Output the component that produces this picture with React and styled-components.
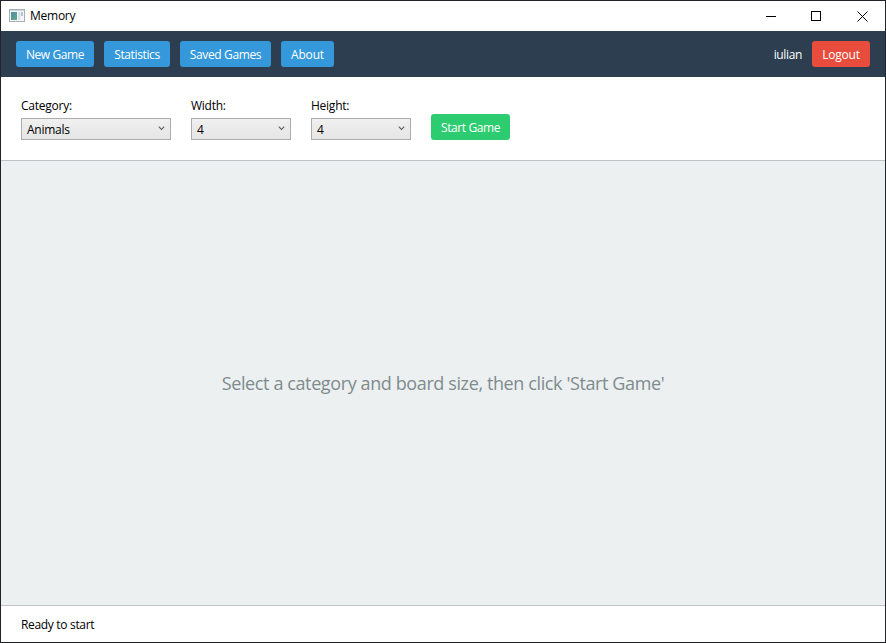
import React from "react";
import styled, { createGlobalStyle } from "styled-components";

const GlobalStyle = createGlobalStyle`
  * { box-sizing: border-box; }
  body { margin: 0; overflow: hidden; }
`;

const Window = styled.div`
  width: 886px;
  height: 643px;
  display: flex;
  flex-direction: column;
  border: 1px solid #22222a;
  background: #fff;
  color: #000;
  font: 12px/16px "Segoe UI", "Open Sans", "Noto Sans", sans-serif;
`;

const TitleBar = styled.header`
  height: 30px;
  flex: none;
  display: flex;
  align-items: center;
  padding-left: 8px;
`;

const Title = styled.span`
  margin-left: 5px;
  flex: 1;
  letter-spacing: -0.25px;
`;

const Caption = styled.button`
  width: ${(p) => p.$width}px;
  height: 30px;
  padding: 0;
  border: 0;
  background: none;
  display: flex;
  align-items: center;
  justify-content: center;
`;

const NavBar = styled.nav`
  height: 46px;
  flex: none;
  display: flex;
  align-items: center;
  gap: 10px;
  padding: 0 15px;
  background: #2c3e50;
`;

const Button = styled.button`
  width: ${(p) => p.$width}px;
  height: 26px;
  flex: none;
  padding: 2px 0 0;
  border: 0;
  border-radius: 3px;
  background: ${(p) => p.$color || "#3498db"};
  color: #fff;
  font: inherit;
  letter-spacing: ${(p) => p.$tracking || 0}px;
  white-space: nowrap;
`;

const User = styled.span`
  margin-left: auto;
  padding-top: 2px;
  color: #fff;
  letter-spacing: -0.35px;
`;

const Options = styled.section`
  height: 84px;
  flex: none;
  display: flex;
  align-items: flex-end;
  gap: 20px;
  padding: 0 20px 20px;
  border-bottom: 1px solid #bdc3c7;
`;

const Field = styled.label`
  width: ${(p) => p.$width}px;
  display: flex;
  flex-direction: column;
  gap: 4px;
  letter-spacing: -0.25px;
`;

const Combo = styled.div`
  height: 22px;
  display: flex;
  align-items: center;
  justify-content: space-between;
  padding: 1px 5px 0;
  border: 1px solid #acacac;
  background: linear-gradient(#f0f0f0, #e5e5e5);
`;

const ChevronIcon = styled.svg`
  margin-bottom: 2px;
`;

const Board = styled.main`
  flex: 1;
  display: flex;
  align-items: center;
  justify-content: center;
  background: #ecf0f1;
  color: #7f8c8d;
  font-size: 18px;
  line-height: 24px;
  letter-spacing: -0.39px;
  white-space: nowrap;
`;

const StatusBar = styled.footer`
  height: 37px;
  flex: none;
  display: flex;
  align-items: center;
  padding: 2px 20px 0;
  border-top: 1px solid #bdc3c7;
  letter-spacing: -0.32px;
`;

const AppIcon = () => (
  <svg width="16" height="14" viewBox="0 0 16 14">
    <defs>
      <linearGradient id="pane" x2="1" y2="1">
        <stop offset="0" stopColor="#4d8fa0" />
        <stop offset="1" stopColor="#69a58c" />
      </linearGradient>
    </defs>
    <rect x=".5" y=".5" width="15" height="12" fill="#f4f6f7" stroke="#a9b0b5" />
    <rect x="1" y="1" width="14" height="1" fill="#cfd6da" />
    <rect x="2" y="3" width="6" height="8" fill="url(#pane)" />
    <rect x="9" y="3" width="2.5" height="8" fill="#d9e2e8" />
    <rect x="12" y="3" width="2" height="4" fill="#b4c4d0" />
  </svg>
);

const Select = ({ label, value, width }) => (
  <Field $width={width}>
    <span>{label}</span>
    <Combo>
      <span>{value}</span>
      <ChevronIcon width="7" height="5" viewBox="0 0 7 5">
        <path d="M.8.7 3.5 3.4 6.2.7" fill="none" stroke="#606060" strokeWidth="1.1" />
      </ChevronIcon>
    </Combo>
  </Field>
);

export default function App() {
  return (
    <>
      <GlobalStyle />
      <Window>
        <TitleBar>
          <AppIcon />
          <Title>Memory</Title>
          <Caption aria-label="Minimize" $width={42}>
            <svg width="10" height="10"><path d="M0 5.5h10" stroke="#000" /></svg>
          </Caption>
          <Caption aria-label="Maximize" $width={48}>
            <svg width="10" height="10"><rect x=".5" y=".5" width="9" height="9" fill="none" stroke="#000" /></svg>
          </Caption>
          <Caption aria-label="Close" $width={45}>
            <svg width="11" height="11"><path d="M.5.5l10 10M10.5.5l-10 10" stroke="#000" /></svg>
          </Caption>
        </TitleBar>
        <NavBar>
          <Button $width={78} $tracking={-0.4}>New Game</Button>
          <Button $width={66} $tracking={-0.38}>Statistics</Button>
          <Button $width={91} $tracking={-0.36}>Saved Games</Button>
          <Button $width={53} $tracking={-0.2}>About</Button>
          <User>iulian</User>
          <Button $width={58} $tracking={-0.2} $color="#e74c3c">Logout</Button>
        </NavBar>
        <Options>
          <Select label="Category:" value="Animals" width={150} />
          <Select label="Width:" value="4" width={100} />
          <Select label="Height:" value="4" width={100} />
          <Button $width={79} $tracking={-0.4} $color="#2ecc71">Start Game</Button>
        </Options>
        <Board>Select a category and board size, then click 'Start Game'</Board>
        <StatusBar>Ready to start</StatusBar>
      </Window>
    </>
  );
}
